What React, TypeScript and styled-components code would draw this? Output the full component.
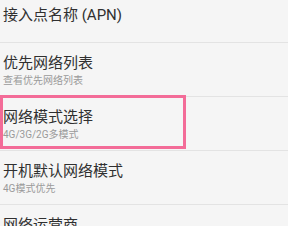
import styled, { createGlobalStyle } from 'styled-components';

const GlobalStyle = createGlobalStyle`
  html, body {
    margin: 0;
    padding: 0;
    background: #f5f5f5;
  }
  body {
    width: 288px;
    height: 226px;
    overflow: hidden;
    font-family: Roboto, "Noto Sans CJK SC", sans-serif;
  }
`;

const SettingsList = styled.div`
  display: flex;
  flex-direction: column;
  background: #f5f5f5;
`;

const Row = styled.div<{ $single?: boolean }>`
  position: relative;
  display: flex;
  flex-direction: column;
  gap: 3px;
  box-sizing: border-box;
  height: ${(p) => (p.$single ? '43px' : '54px')};
  padding: ${(p) => (p.$single ? '6px 0 0 3px' : '11px 0 0 3px')};
  border-bottom: 1px solid #e3e3e3;
`;

const Title = styled.div`
  font-size: 15px;
  line-height: 18px;
  color: #303030;
  white-space: nowrap;
`;

const Subtitle = styled.div`
  font-size: 10px;
  line-height: 12px;
  color: #9a9a9a;
  white-space: nowrap;
`;

const Highlight = styled.div`
  position: absolute;
  left: 0;
  top: -2px;
  width: 186px;
  height: 54px;
  box-sizing: border-box;
  border: 3px solid #f36c98;
  pointer-events: none;
`;

const items = [
  { title: '优先网络列表', sub: '查看优先网络列表' },
  { title: '网络模式选择', sub: '4G/3G/2G多模式', marked: true },
  { title: '开机默认网络模式', sub: '4G模式优先' },
  { title: '网络运营商', sub: '' },
];

export default function App() {
  return (
    <>
      <GlobalStyle />
      <SettingsList>
        <Row $single>
          <Title>接入点名称 (APN)</Title>
        </Row>
        {items.map((item) => (
          <Row key={item.title}>
            <Title>{item.title}</Title>
            {item.sub && <Subtitle>{item.sub}</Subtitle>}
            {item.marked && <Highlight />}
          </Row>
        ))}
      </SettingsList>
    </>
  );
}
